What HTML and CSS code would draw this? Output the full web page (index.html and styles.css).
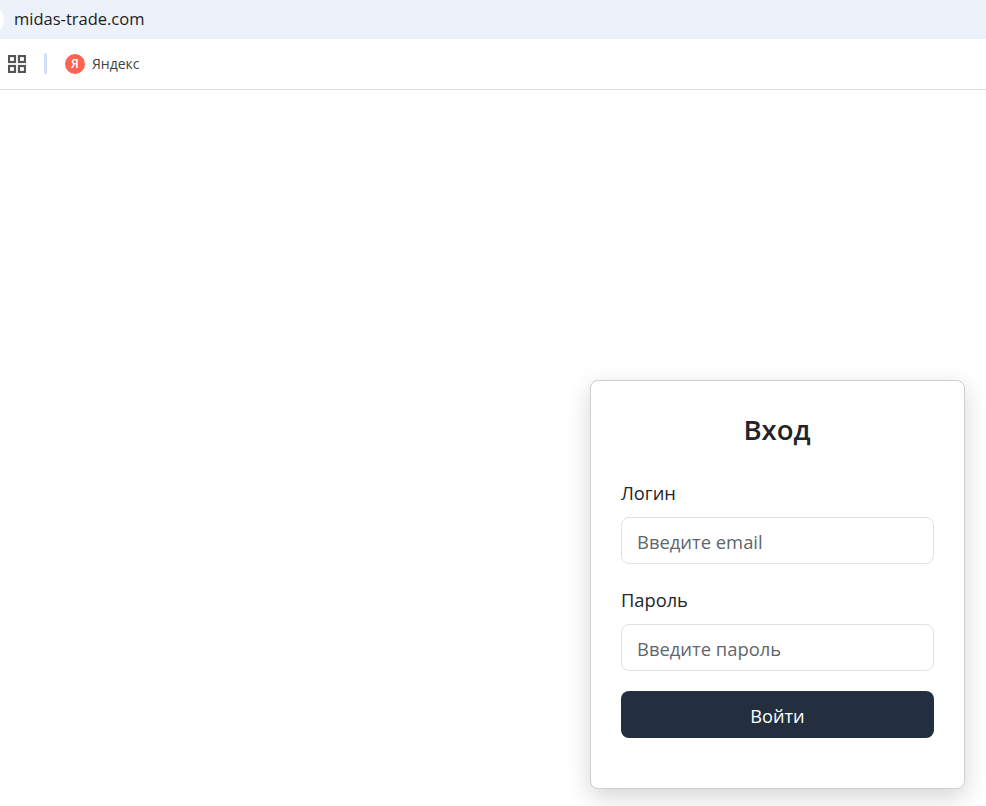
FILE: index.html
```html
<!DOCTYPE html>
<html lang="ru">
<head>
<meta charset="utf-8">
<title>Вход</title>
<link rel="stylesheet" href="styles.css">
</head>
<body>
<div class="address-bar">
  <span class="site-badge"></span>
  <span class="url">midas-trade.com</span>
</div>
<div class="bookmarks">
  <svg class="apps" width="18" height="18" viewBox="0 0 18 18" aria-hidden="true">
    <g fill="none" stroke="#555" stroke-width="2.2">
      <rect x="1" y="1" width="6" height="6"/>
      <rect x="11" y="1" width="6" height="6"/>
      <rect x="1" y="11" width="6" height="6"/>
      <rect x="11" y="11" width="6" height="6"/>
    </g>
  </svg>
  <span class="divider"></span>
  <a class="bookmark">
    <span class="ya-logo">Я</span>
    <span class="ya-name">Яндекс</span>
  </a>
</div>
<main class="page">
  <form class="card">
    <h1 class="title">Вход</h1>
    <div class="fields">
      <div class="field">
        <label class="label" for="login">Логин</label>
        <input class="input" id="login" type="text" placeholder="Введите email">
      </div>
      <div class="field">
        <label class="label" for="password">Пароль</label>
        <input class="input" id="password" type="text" placeholder="Введите пароль">
      </div>
    </div>
    <button class="submit" type="button">Войти</button>
  </form>
</main>
</body>
</html>
```
FILE: styles.css
```css
* { box-sizing: border-box; }
html, body { margin: 0; height: 100%; overflow: hidden; background: #fff; }
body {
  display: flex;
  flex-direction: column;
  font-family: "Open Sans", "Noto Sans", sans-serif;
  color: #212529;
}
.address-bar {
  height: 39px;
  flex: none;
  display: flex;
  align-items: center;
  background: #ecf1fa;
  overflow: hidden;
}
.site-badge {
  width: 20px;
  height: 26px;
  margin-left: -16px;
  margin-right: 10px;
  border-radius: 50%;
  background: #fff;
  flex: none;
}
.url { font-size: 16.5px; line-height: 22px; margin-bottom: 2px; color: #1c1c1e; }
.bookmarks {
  height: 51px;
  flex: none;
  display: flex;
  align-items: center;
  padding: 0 0 1px 8px;
  border-bottom: 1px solid #dedede;
  background: #fff;
}
.apps { flex: none; }
.divider {
  width: 3px;
  height: 21px;
  margin-left: 18px;
  background: #cfe0f8;
  border-radius: 1.5px;
}
.bookmark { display: flex; align-items: center; margin-left: 18px; gap: 7px; }
.ya-logo {
  width: 20px;
  height: 20px;
  border-radius: 50%;
  background: #fc6350;
  color: #fff;
  font: 600 12px/20px "Open Sans", sans-serif;
  text-align: center;
}
.ya-name { font-size: 14px; color: #3f3f3f; }
.page {
  flex: 1;
  display: flex;
  justify-content: flex-end;
  align-items: flex-start;
  padding: 290px 21px 0 0;
}
.card {
  width: 375px;
  height: 409px;
  padding: 30px;
  background: #fff;
  border: 1px solid #cfcfcf;
  border-radius: 8px;
  box-shadow: 0 8px 24px rgba(0, 0, 0, 0.17);
}
.title {
  margin: 0 0 31px;
  padding-right: 1px;
  font-size: 27.5px;
  line-height: 38px;
  font-weight: 600;
  text-align: center;
  color: #212529;
}
.fields {
  display: flex;
  flex-direction: column;
  gap: 23px;
  margin-bottom: 20px;
}
.label {
  display: block;
  margin-bottom: 12px;
  font-size: 18.3px;
  line-height: 25px;
}
.input {
  display: block;
  width: 100%;
  height: 47px;
  padding: 2px 15px 0;
  border: 1px solid #dee2e6;
  border-radius: 8px;
  font: 18.4px "Open Sans", "Noto Sans", sans-serif;
  color: #212529;
  outline: none;
}
.input::placeholder { color: #5f666d; opacity: 1; }
.submit {
  display: block;
  width: 100%;
  height: 47px;
  padding: 2px 0 0;
  border: 0;
  border-radius: 8px;
  background: #232f3e;
  color: #fff;
  font: 18.2px "Open Sans", "Noto Sans", sans-serif;
}
```
